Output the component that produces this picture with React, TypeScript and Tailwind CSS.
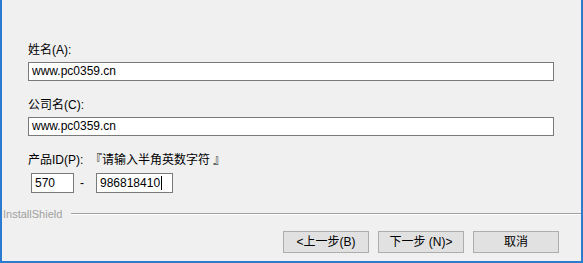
import React from 'react';

const font = { fontFamily: '"Liberation Sans", "Noto Sans CJK SC", Arial, sans-serif' };

function Field({ label, value }: { label: string; value: string }) {
  return (
    <div className="flex flex-col">
      <div className="h-[14px] leading-[14px] text-[12px] text-black">{label}</div>
      <div className="mt-[5px] h-[19px] w-[526px] border border-[#7a7a7a] bg-white px-[3px] text-[12px] leading-[17px] text-black">
        {value}
      </div>
    </div>
  );
}

function Btn({ children }: { children: React.ReactNode }) {
  return (
    <button className="h-[22px] w-[86px] border border-[#adadad] bg-[#e1e1e1] text-[12px] leading-[20px] text-black">
      {children}
    </button>
  );
}

export default function App() {
  return (
    <div
      className="w-[583px] h-[263px] bg-[#f0f0f0] border-l-2 border-r-2 border-b-2 border-[#2b7bd0] flex flex-col overflow-hidden"
      style={font}
    >
      {/* 表单区域 */}
      <div className="pl-[26px] pt-[43px] flex flex-col gap-[17px]">
        <Field label="姓名(A):" value="www.pc0359.cn" />
        <Field label="公司名(C):" value="www.pc0359.cn" />
      </div>

      {/* 产品ID */}
      <div className="pl-[26px] mt-[17px] flex flex-col">
        <div className="h-[14px] leading-[14px] text-[12px] text-black">
          产品ID(P):&nbsp;&nbsp;『请输入半角英数字符 』
        </div>
        <div className="mt-[6px] flex items-center pl-[3px]">
          <div className="h-[20px] w-[43px] border border-[#7a7a7a] bg-white px-[3px] text-[12px] leading-[18px]">570</div>
          <span className="ml-[6px] w-[16px] text-[12px]">-</span>
          <div className="h-[20px] w-[77px] border border-[#7a7a7a] bg-white px-[3px] text-[12px] leading-[18px] flex items-center">
            986818410
            <span className="ml-[1px] inline-block h-[14px] w-px bg-black" />
          </div>
        </div>
      </div>

      {/* InstallShield 分隔线 */}
      <div className="mt-[15px] flex items-center pl-[1px]">
        <span className="text-[11px] leading-[12px] text-[#a0a0a0]">InstallShield</span>
        <div className="ml-[9px] flex-1 flex flex-col">
          <div className="h-px bg-[#a0a0a0]" />
          <div className="h-px bg-white" />
        </div>
      </div>

      {/* 按钮 */}
      <div className="mt-[11px] flex justify-end gap-[9px] pr-[22px]">
        <Btn>&lt;上一步(B)</Btn>
        <Btn>下一步 (N)&gt;</Btn>
        <Btn>取消</Btn>
      </div>
    </div>
  );
}
